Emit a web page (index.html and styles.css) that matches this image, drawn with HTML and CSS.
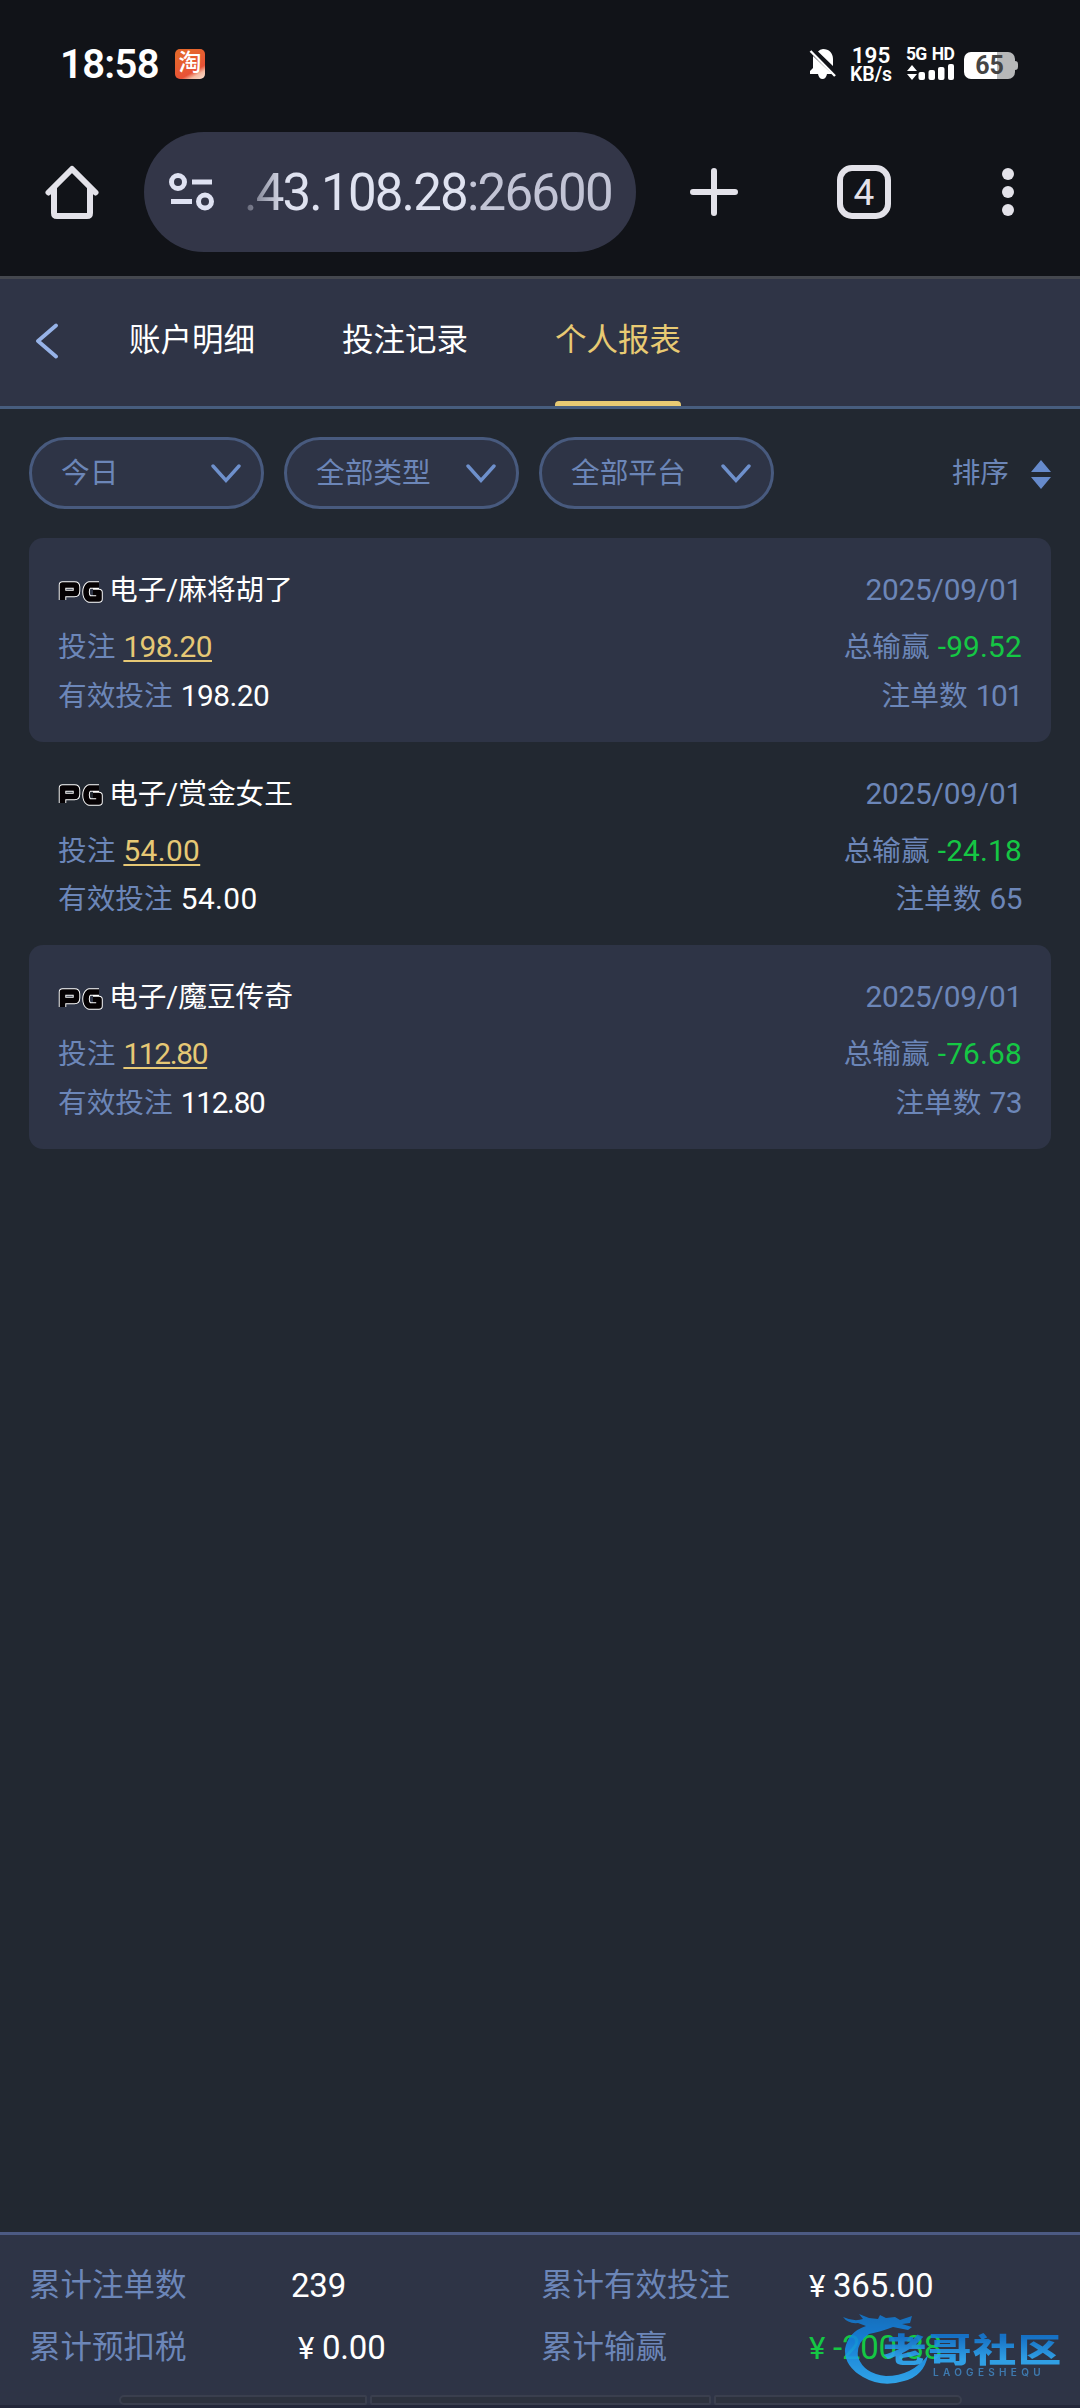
FILE: index.html
```html
<!DOCTYPE html>
<html lang="zh-CN">
<head>
<meta charset="utf-8">
<title>个人报表</title>
<link rel="stylesheet" href="styles.css">
</head>
<body>
<svg class="defs" width="0" height="0" aria-hidden="true">
  <symbol id="pg" viewBox="0 0 46 24">
    <g fill="none" stroke-linejoin="round">
      <g stroke="#fff" stroke-width="7.500"><path d="M4.500 20V5H16.500Q18.500 5 18.500 7V11Q18.500 13.500 16.500 13.500H5"/><path d="M41 5H31Q28 7 28 12T31 19H41V12.500H35"/></g>
      <g stroke="#050103" stroke-width="5.600"><path d="M4.500 20V5H16.500Q18.500 5 18.500 7V11Q18.500 13.500 16.500 13.500H5"/><path d="M41 5H31Q28 7 28 12T31 19H41V12.500H35"/></g>
    </g>
  </symbol>
  <symbol id="down" viewBox="0 0 30 20"><path d="M2 2L15 16.500L28 2" fill="none" stroke="#6e90cc" stroke-width="3.400" stroke-linecap="round"/></symbol>
</svg>

<header class="status">
  <span class="time">18:58</span>
  <span class="app">淘</span>
  <svg class="bell" width="28" height="32" viewBox="0 0 28 32"><path fill="#fff" d="M9 3.500Q11 1 14 1C20 1 24 5 24 11V18L9 3.500ZM4 8L23 26H18Q17 31 13.500 31T9 26H1V23L4 20Z"/><path d="M1.500 3L26 28" stroke="#fff" stroke-width="2.400"/></svg>
  <span class="speed"><b>195</b><b class="unit">KB/s</b></span>
  <span class="network">
    <span class="net-label"><b>5G</b><b>HD</b></span>
    <svg width="48" height="17" viewBox="0 0 48 17" fill="#fff"><path d="M1 7L6 1L11 7ZM1 10H11L6 16Z"/><rect x="12.500" y="8" width="6.500" height="8" rx="2"/><rect x="22.500" y="6" width="6.500" height="10" rx="2"/><rect x="32" y="3" width="6.500" height="13" rx="2"/><rect x="42" y="0" width="6" height="16" rx="2"/></svg>
  </span>
  <span class="battery">65</span>
</header>

<nav class="browser">
  <svg class="home" width="54" height="54" viewBox="0 0 54 54"><path d="M3.500 27.500L27 4L50.500 27.500M9 23V48Q9 51 12 51H42Q45 51 45 48V23" fill="none" stroke="#e3e2e9" stroke-width="6" stroke-linecap="round" stroke-linejoin="round"/></svg>
  <div class="address">
    <svg width="46" height="40" viewBox="0 0 46 40" fill="none" stroke="#dfe2f2" stroke-width="5"><circle cx="9" cy="10" r="6.500"/><path d="M23 10H43M2 29.500H23"/><circle cx="36" cy="29.500" r="6.500"/></svg>
    <span class="url">.43.108.28<span class="port">:26600</span></span>
  </div>
  <svg class="plus" width="48" height="48" viewBox="0 0 48 48"><path d="M24 3V45M3 24H45" stroke="#e3e2e9" stroke-width="6" stroke-linecap="round"/></svg>
  <span class="tab-count">4</span>
  <svg class="more" width="12" height="48" viewBox="0 0 12 48" fill="#e3e2e9"><circle cx="6" cy="6" r="6"/><circle cx="6" cy="24" r="6"/><circle cx="6" cy="42" r="6"/></svg>
</nav>

<nav class="tabs">
  <svg class="back" width="24" height="36" viewBox="0 0 24 36"><path d="M21 2.500L3 18L21 33.500" fill="none" stroke="#97b3e8" stroke-width="3.800" stroke-linecap="round" stroke-linejoin="round"/></svg>
  <span class="tab">账户明细</span>
  <span class="tab">投注记录</span>
  <span class="tab active">个人报表</span>
</nav>

<main>
  <div class="filters">
    <span class="select">今日<svg width="30" height="20"><use href="#down"/></svg></span>
    <span class="select">全部类型<svg width="30" height="20"><use href="#down"/></svg></span>
    <span class="select">全部平台<svg width="30" height="20"><use href="#down"/></svg></span>
    <span class="sort">排序<svg width="20" height="30" viewBox="0 0 20 30" fill="#668acb"><path d="M0 12L10 0L20 12ZM0 17H20L10 29Z"/></svg></span>
  </div>

  <section class="card filled">
    <div class="row title"><span class="game"><svg width="46" height="24"><use href="#pg"/></svg>电子/麻将胡了</span><span class="date">2025/09/01</span></div>
    <div class="row"><span>投注<a class="bet">198.20</a></span><span>总输赢<i class="loss">-99.52</i></span></div>
    <div class="row"><span>有效投注<i class="valid">198.20</i></span><span>注单数<i class="tight">101</i></span></div>
  </section>
  <section class="card">
    <div class="row title"><span class="game"><svg width="46" height="24"><use href="#pg"/></svg>电子/赏金女王</span><span class="date">2025/09/01</span></div>
    <div class="row"><span>投注<a class="bet loose">54.00</a></span><span>总输赢<i class="loss">-24.18</i></span></div>
    <div class="row"><span>有效投注<i class="valid loose">54.00</i></span><span>注单数<i>65</i></span></div>
  </section>
  <section class="card filled">
    <div class="row title"><span class="game"><svg width="46" height="24"><use href="#pg"/></svg>电子/魔豆传奇</span><span class="date">2025/09/01</span></div>
    <div class="row"><span>投注<a class="bet tight">112.80</a></span><span>总输赢<i class="loss">-76.68</i></span></div>
    <div class="row"><span>有效投注<i class="valid tight">112.80</i></span><span>注单数<i>73</i></span></div>
  </section>
</main>

<footer class="summary">
  <div class="totals">
    <span>累计注单数</span><span class="val">239</span><span>累计有效投注</span><span class="val"><i class="yen">¥</i>365.00</span>
    <span>累计预扣税</span><span class="val inset"><i class="yen">¥</i>0.00</span><span>累计输赢</span><span class="val green"><i class="yen">¥</i>-200.38</span>
  </div>
  <div class="stubs"><span></span><span></span><span></span></div>
  <div class="watermark">
    <svg width="96" height="74" viewBox="0 0 96 74">
      <defs><linearGradient id="sea" x1="0" y1="0" x2="0" y2="1"><stop offset="0" stop-color="#1376cb"/><stop offset=".4" stop-color="#1389e8"/><stop offset="1" stop-color="#32b4ff"/></linearGradient></defs>
      <path fill="url(#sea)" d="M3 5Q14 10 23 7L19 2L29 6L38 7L40 3L46 6L55 5L60 8L72 4L70 11L62 12L72 15L68 18L53 15Q40 20 29 22Q16 31 18 45Q24 62 46 64Q72 64 88 43Q84 64 64 69Q42 76 23 65Q4 54 5 37Q8 20 26 14L18 11Q8 12 3 5Z"/>
    </svg>
    <span class="brand">老哥社区</span>
    <span class="latin">LAOGESHEQU</span>
  </div>
</footer>
</body>
</html>
```

FILE: styles.css
```css
* { box-sizing: border-box; }

body {
  margin: 0;
  width: 1080px;
  height: 2408px;
  display: flex;
  flex-direction: column;
  overflow: hidden;
  background: #222831;
  color: #6c86b8;
  font-family: Roboto, "Noto Sans CJK SC", sans-serif;
  font-size: 28.7px;
}

i { font-style: normal; }
svg { display: block; flex: none; }
.defs { position: absolute; }

/* phone status bar */
.status {
  height: 132px;
  flex: none;
  padding: 48px 60px 0 60px;
  display: flex;
  align-items: flex-start;
  background: #111318;
  color: #fff;
}
.time { width: 115px; padding-top: 1px; font-size: 40px; font-weight: 600; line-height: 32px; letter-spacing: -.7px; }
.app {
  width: 30px;
  height: 30px;
  margin-top: 1px;
  border-radius: 5px;
  background: linear-gradient(150deg, #e5672c 0 20%, #e85237 70%, #f6b9a0 82%, #fbe0d0);
  font-size: 23px;
  font-weight: 500;
  line-height: 27px;
  text-align: center;
}
.bell { margin-left: 604px; }
.speed { width: 50px; margin: -2px 0 0 9px; font-size: 22.5px; line-height: 19px; text-align: center; }
.speed b { display: block; font-weight: 600; }
.speed .unit { font-size: 19.5px; line-height: 19px; }
.network { width: 48px; margin-left: 10px; }
.net-label { display: flex; justify-content: space-between; font-size: 17.5px; line-height: 12px; margin-bottom: 4px; letter-spacing: -.8px; }
.battery {
  position: relative;
  width: 51px;
  height: 27px;
  margin: 4px 0 0 10px;
  border-radius: 7px;
  background: linear-gradient(90deg, #fff 65%, #b7b8b9 65%);
  color: #444;
  font-size: 25px;
  font-weight: 700;
  line-height: 28px;
  text-align: center;
}
.battery::after {
  content: "";
  position: absolute;
  left: 51px;
  top: 9px;
  width: 3px;
  height: 9px;
  border-radius: 0 3px 3px 0;
  background: #b7b8b9;
}

/* browser toolbar */
.browser {
  height: 147px;
  flex: none;
  padding: 0 66px 24px 45px;
  display: flex;
  align-items: center;
  border-bottom: 3px solid #44474e;
  background: #111318;
  color: #e3e2e9;
}
.address {
  width: 492px;
  height: 120px;
  margin-left: 45px;
  padding-left: 25px;
  display: flex;
  align-items: center;
  border-radius: 60px;
  background: #333648;
}
.url {
  margin: 2px 0 0 29px;
  font-size: 51px;
  line-height: 60px;
  letter-spacing: -1.8px;
  color: #dfe2f0;
  -webkit-mask-image: linear-gradient(90deg, rgba(0,0,0,.25) 0, #000 40px);
  mask-image: linear-gradient(90deg, rgba(0,0,0,.25) 0, #000 40px);
}
.port { color: #c2c4d5; }
.plus { margin-left: 54px; }
.tab-count {
  width: 54px;
  height: 54px;
  margin-left: 99px;
  border: 6px solid #e3e2e9;
  border-radius: 15px;
  font-size: 37px;
  line-height: 43px;
  text-align: center;
}
.more { margin-left: 111px; }

/* section tabs */
.tabs {
  height: 130px;
  flex: none;
  padding-left: 35px;
  display: flex;
  border-bottom: 3px solid #475d7e;
  background: #2f3446;
  color: #fff;
}
.back { margin: 44px 70px 0 0; }
.tab { position: relative; width: 126px; margin-right: 87px; font-size: 31.5px; line-height: 123px; white-space: nowrap; }
.tab.active { color: #e8ca73; }
.tab.active::after {
  content: "";
  position: absolute;
  left: 0;
  right: 0;
  bottom: 0;
  height: 5px;
  border-radius: 4px 4px 0 0;
  background: #e8ca73;
}

/* filters */
main { flex: 1; padding: 28px 29px 0; }
.filters { height: 72px; margin-bottom: 29px; display: flex; gap: 20px; align-items: center; }
.select {
  width: 235px;
  height: 72px;
  padding: 0 20px 0 29px;
  display: flex;
  align-items: center;
  justify-content: space-between;
  border: 3px solid #485a7e;
  border-radius: 36px;
  background: #2e3446;
  line-height: 64px;
}
.select svg { margin-top: 2px; }
.sort { height: 68px; margin-left: auto; display: flex; align-items: center; gap: 22px; line-height: 64px; }
.sort svg { margin-top: 4px; }

/* report entries */
.card { height: 203.5px; padding: 29px; border-radius: 14px; }
.card.filled { background: #2e3446; }
.row { height: 48.5px; display: flex; justify-content: space-between; line-height: 49px; }
.row.title { height: 46px; margin-bottom: 9px; line-height: 46px; }
.row i, .bet, .date { font-size: 29.8px; letter-spacing: -.5px; }
.row .date { letter-spacing: -.2px; }
.row i, .bet { margin-left: 8px; }
.game { display: flex; align-items: center; gap: 5px; color: #fff; }
.game svg { margin-top: 3px; }
.bet { color: #e6c875; text-decoration: underline; text-decoration-thickness: 2px; text-underline-offset: 3px; }
.row .valid { color: #fff; }
.row .loss { color: #15c744; letter-spacing: .2px; }
.row .loose { letter-spacing: .4px; }
.row .tight { letter-spacing: -1.3px; }

/* totals */
.summary {
  position: relative;
  height: 176px;
  flex: none;
  display: flex;
  flex-direction: column;
  justify-content: space-between;
  border-top: 3px solid #4c5a83;
  border-bottom: 3px solid #24283a;
  background: #2e3446;
}
.totals {
  padding: 20px 0 0 29px;
  display: grid;
  grid-template-columns: 262px 250px 268px 1fr;
  grid-auto-rows: 62px;
  font-size: 31.5px;
  line-height: 62px;
}
.val { color: #fff; font-size: 33px; letter-spacing: -.2px; white-space: nowrap; }
.val.inset { padding-left: 7px; }
.val.green { color: #15c744; }
.yen { display: inline-block; width: 24px; font-size: 31px; }
.stubs { height: 10px; padding-left: 119px; display: flex; gap: 3px; }
.stubs span { width: 248px; border: 2px solid #3a3f4e; border-radius: 6px 2px 2px 6px; background: #2d323e; }
.stubs span:nth-child(2) { width: 341px; border-radius: 2px; }
.stubs span:last-child { border-radius: 2px 6px 6px 2px; }

/* community mark stamped over the last total */
.watermark { position: absolute; left: 840px; top: 77px; width: 240px; height: 76px; opacity: .88; }
.brand {
  position: absolute;
  left: 43px;
  top: 11px;
  font: 900 43.5px/50px "Noto Sans CJK SC", sans-serif;
  letter-spacing: 1.4px;
  white-space: nowrap;
  transform: scaleY(.76);
  background: linear-gradient(#1379d6 20%, #31aefa 80%);
  -webkit-background-clip: text;
  background-clip: text;
  color: transparent;
}
.latin { position: absolute; left: 93px; top: 53px; font: 600 10px/14px Inter, sans-serif; letter-spacing: 4.3px; color: #4083bd; }
```
